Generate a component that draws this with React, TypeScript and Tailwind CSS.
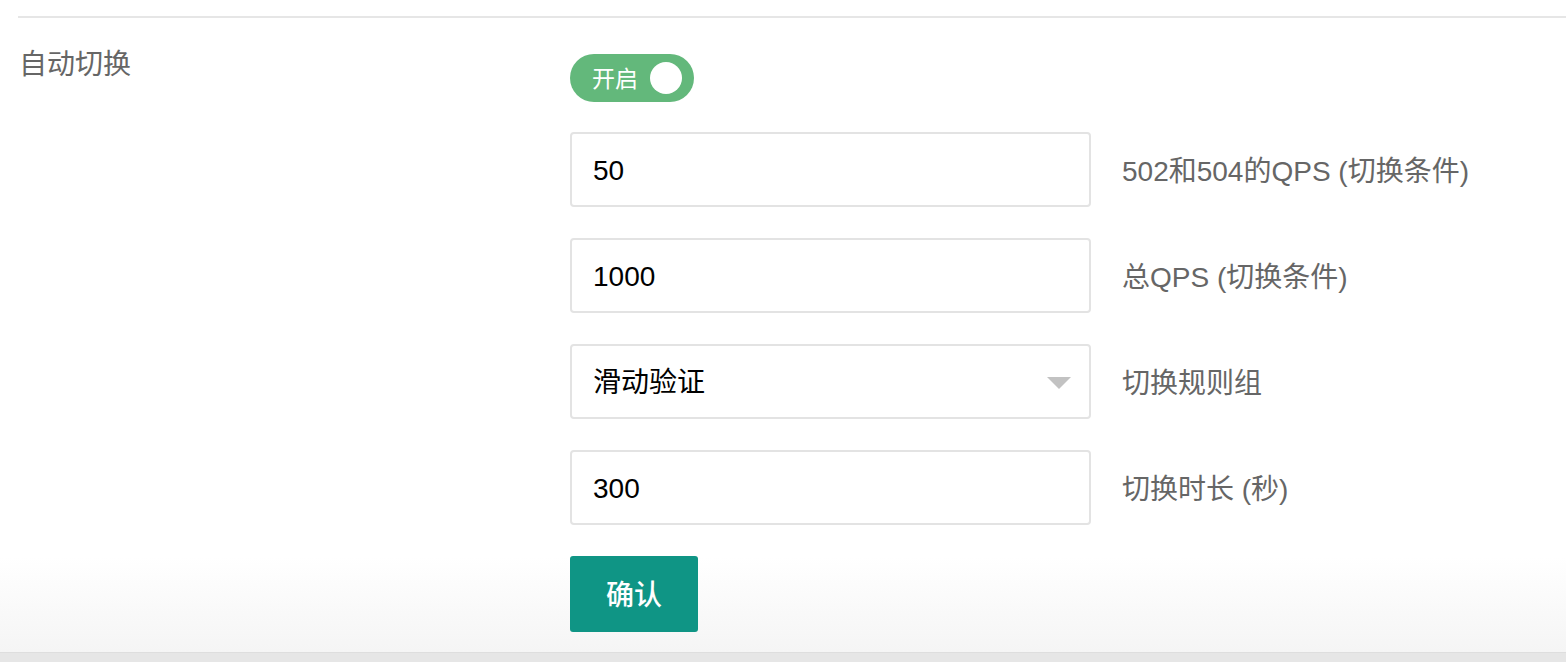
import React, { useState } from 'react';

const font = { fontFamily: '"Liberation Sans", "Noto Sans CJK SC", sans-serif' };

function Field({ value, hint, select }: { value: string; hint: string; select?: boolean }) {
    return (
        <div className="flex items-center">
            <div className="w-[521px] h-[75px] border-2 border-[#e3e3e3] rounded-[4px] flex items-center justify-between pl-[21px] pr-[18px] bg-white">
                <span className="text-[28px] text-black leading-none pt-[3px]">{value}</span>
                {select && (
                    <svg width="24" height="12" viewBox="0 0 24 12" className="mt-[2px]">
                        <polygon points="0,0 24,0 12,12" fill="#c2c2c2" />
                    </svg>
                )}
            </div>
            <span className="ml-[31px] text-[28px] text-[#666666] leading-none pt-[4px]">{hint}</span>
        </div>
    );
}

export default function App() {
    const [on, setOn] = useState(true);

    return (
        <main className="w-[1566px] h-[662px] bg-white flex flex-col overflow-hidden" style={font}>
            <div className="pt-[16px] pl-[18px]">
                <div className="h-[2px] bg-[#e6e6e6]" />
            </div>

            <section className="flex-1 flex bg-gradient-to-b from-white from-[85%] to-[#f5f5f5]">
                <div className="w-[570px] pl-[19px] pt-[33px]">
                    <span className="text-[28px] text-[#666666] leading-none">自动切换</span>
                </div>

                <div className="flex flex-col pt-[36px]">
                    <button
                        onClick={() => setOn(!on)}
                        className="w-[124px] h-[48px] rounded-full bg-[#63b87b] flex items-center justify-between pl-[22px] pr-[12px]"
                    >
                        <span className="text-[23px] text-white leading-none pt-[2px]">开启</span>
                        <span className="w-[32px] h-[32px] rounded-full bg-white" />
                    </button>

                    <div className="flex flex-col gap-[31px] mt-[30px]">
                        <Field value="50" hint="502和504的QPS (切换条件)" />
                        <Field value="1000" hint="总QPS (切换条件)" />
                        <Field value="滑动验证" hint="切换规则组" select />
                        <Field value="300" hint="切换时长 (秒)" />
                    </div>

                    <button className="mt-[31px] w-[128px] h-[76px] rounded-[3px] bg-[#0f9585] text-white text-[28px] font-medium leading-none pt-[4px]">
                        确认
                    </button>
                </div>
            </section>

            <div className="h-[10px] bg-[#e6e6e6] border-t border-[#dedede]" />
        </main>
    );
}
